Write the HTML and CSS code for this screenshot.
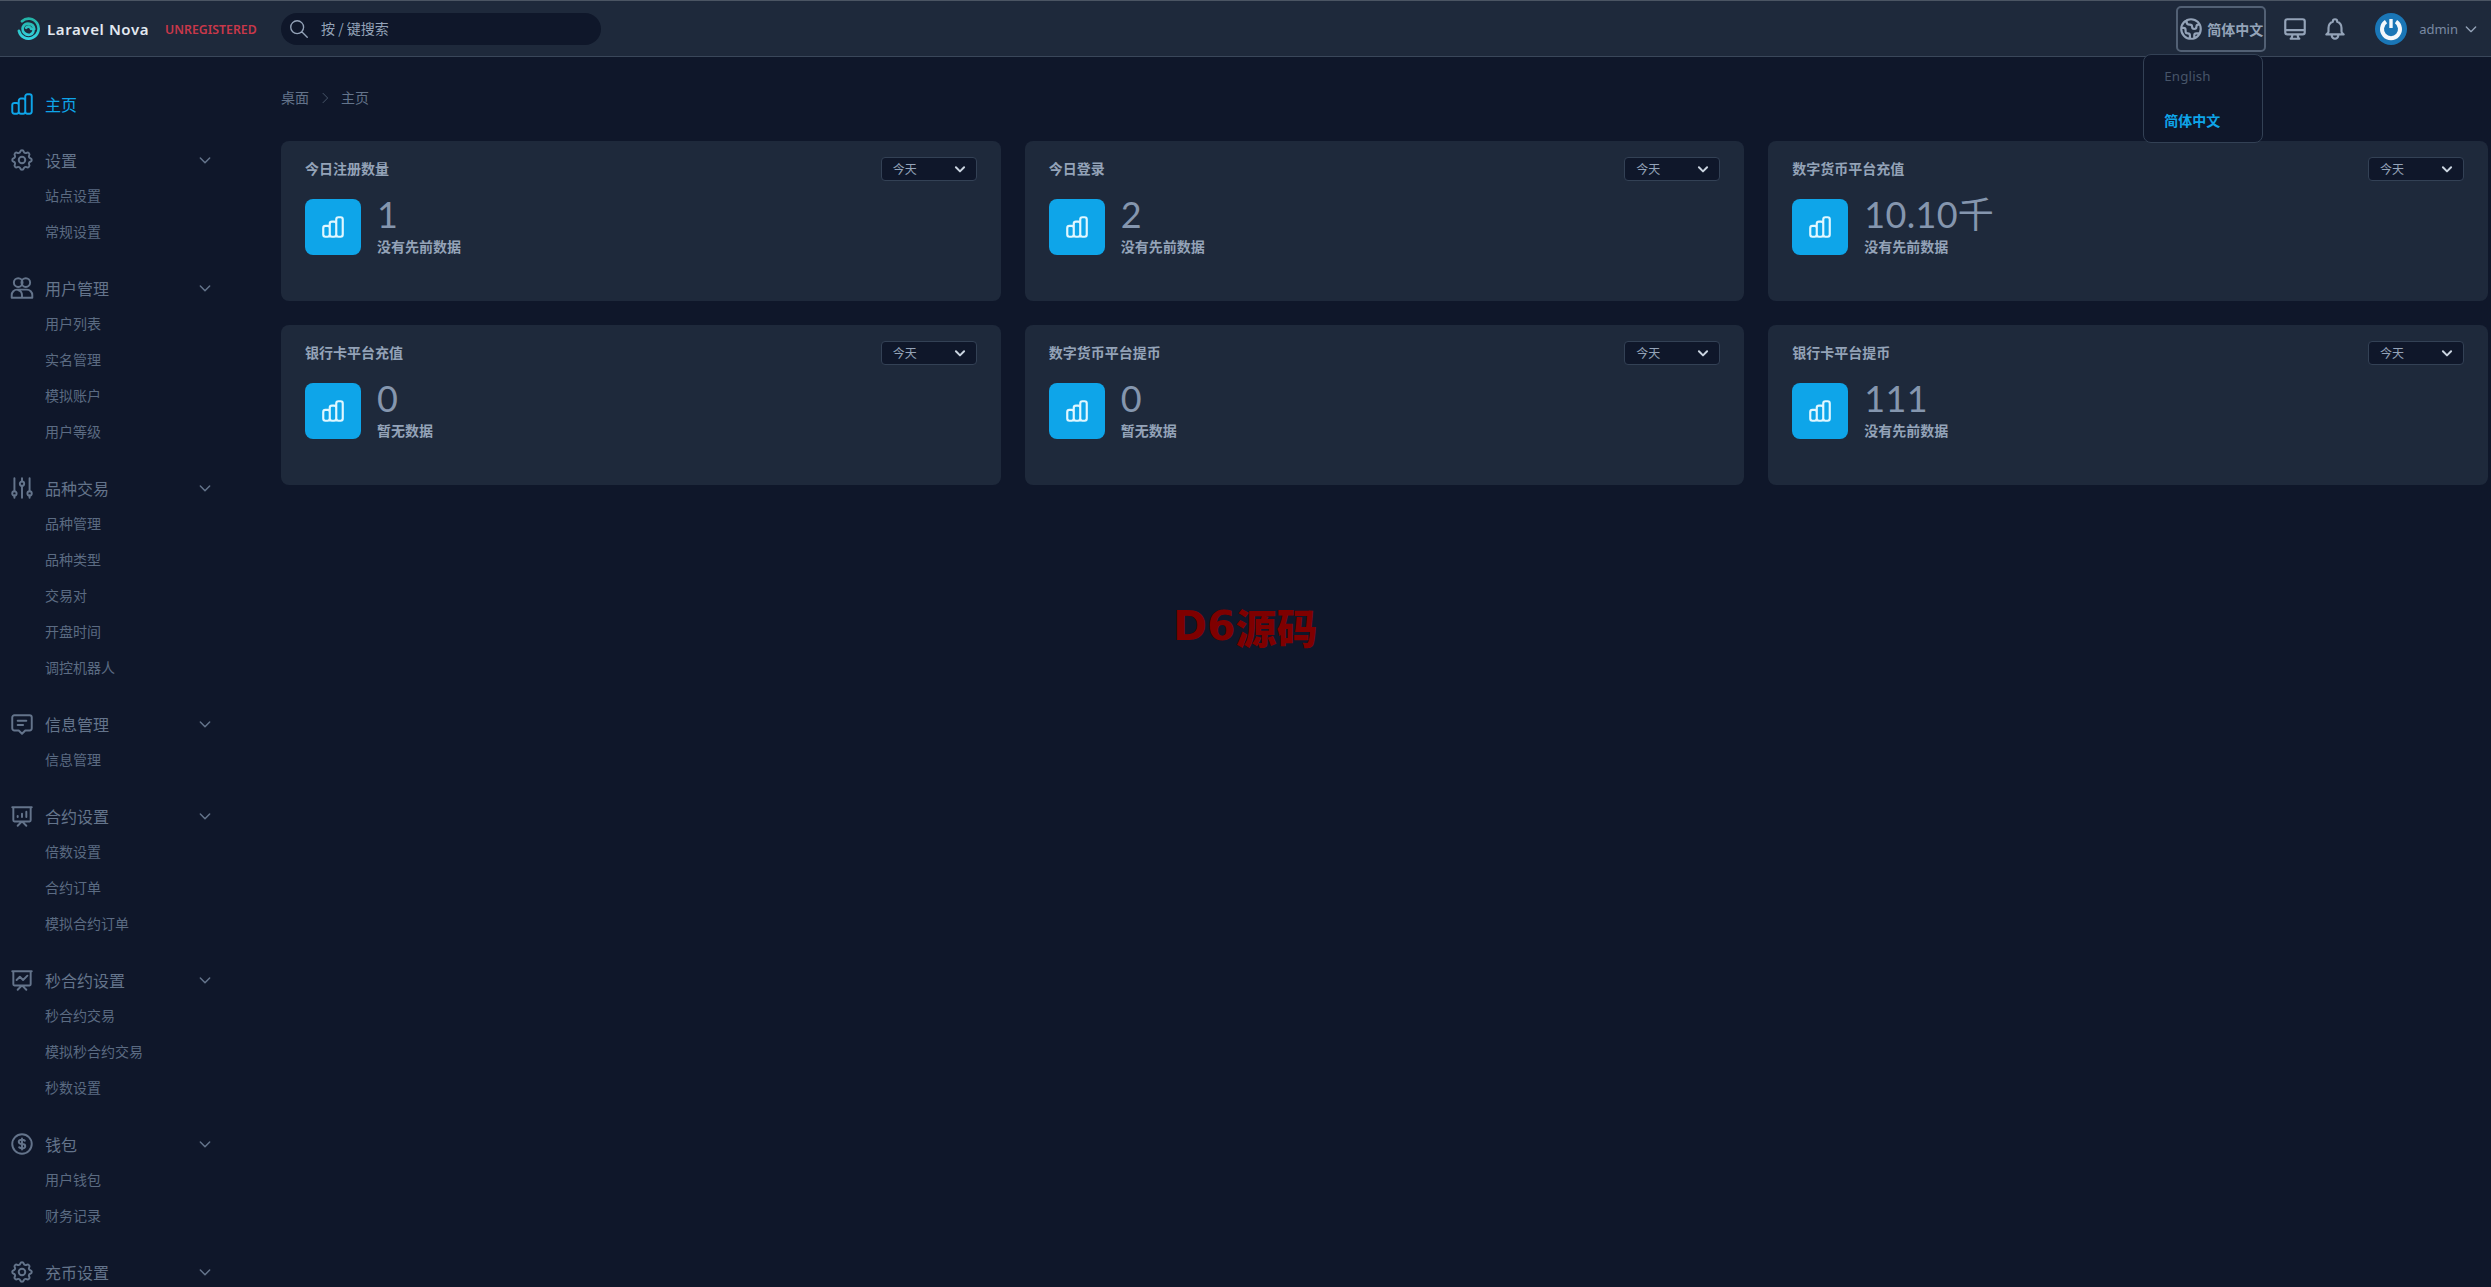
FILE: index.html
```html
<!DOCTYPE html>
<html lang="zh-CN">
<head>
<meta charset="utf-8">
<title>Laravel Nova</title>
<link rel="stylesheet" href="styles.css">
</head>
<body>
<svg class="defs" aria-hidden="true">
  <symbol id="i-chart" viewBox="0 0 24 24"><path d="M9 19v-6a2 2 0 00-2-2H5a2 2 0 00-2 2v6a2 2 0 002 2h2a2 2 0 002-2zm0 0V9a2 2 0 012-2h2a2 2 0 012 2v10m-6 0a2 2 0 002 2h2a2 2 0 002-2m0 0V5a2 2 0 012-2h2a2 2 0 012 2v14a2 2 0 01-2 2h-2a2 2 0 01-2-2z"/></symbol>
  <symbol id="i-cog" viewBox="0 0 24 24"><path d="M10.325 4.317c.426-1.756 2.924-1.756 3.35 0a1.724 1.724 0 002.573 1.066c1.543-.94 3.31.826 2.37 2.37a1.724 1.724 0 001.065 2.572c1.756.426 1.756 2.924 0 3.35a1.724 1.724 0 00-1.066 2.573c.94 1.543-.826 3.31-2.37 2.37a1.724 1.724 0 00-2.572 1.065c-.426 1.756-2.924 1.756-3.35 0a1.724 1.724 0 00-2.573-1.066c-1.543.94-3.31-.826-2.37-2.37a1.724 1.724 0 00-1.065-2.572c-1.756-.426-1.756-2.924 0-3.35a1.724 1.724 0 001.066-2.573c-.94-1.543.826-3.31 2.37-2.37.996.608 2.296.07 2.572-1.065z"/><path d="M15 12a3 3 0 11-6 0 3 3 0 016 0z"/></symbol>
  <symbol id="i-users" viewBox="0 0 24 24"><circle cx="8.5" cy="7" r="4"/><circle cx="15.5" cy="7" r="4"/><path d="M2.5 21v-2.500a5 5 0 015-5h9a5 5 0 015 5V21zM12 21v-2a5 5 0 00-3.500-5"/></symbol>
  <symbol id="i-sliders" viewBox="0 0 24 24"><path d="M5 3v12M5 19v2M12 3v3M12 10v11M19 3v12M19 19v2"/><circle cx="5" cy="17" r="2"/><circle cx="12" cy="8" r="2"/><circle cx="19" cy="17" r="2"/></symbol>
  <symbol id="i-chat" viewBox="0 0 24 24"><path d="M8 9h8M8 13h5M5 4h14a2 2 0 012 2v10a2 2 0 01-2 2h-4l-3 3-3-3H5a2 2 0 01-2-2V6a2 2 0 012-2z"/></symbol>
  <symbol id="i-pres-bar" viewBox="0 0 24 24"><path d="M8 13v-1m4 1v-3m4 3V8M8 21l4-4 4 4M3 4h18M4 4h16v12a1 1 0 01-1 1H5a1 1 0 01-1-1V4z"/></symbol>
  <symbol id="i-pres-line" viewBox="0 0 24 24"><path d="M7 12l3-3 3 3 4-4M8 21l4-4 4 4M3 4h18M4 4h16v12a1 1 0 01-1 1H5a1 1 0 01-1-1V4z"/></symbol>
  <symbol id="i-dollar" viewBox="0 0 24 24"><path d="M12 8c-1.657 0-3 .895-3 2s1.343 2 3 2 3 .895 3 2-1.343 2-3 2m0-8c1.110 0 2.080.402 2.599 1M12 8V7m0 1v8m0 0v1m0-1c-1.110 0-2.080-.402-2.599-1M21 12a9 9 0 11-18 0 9 9 0 0118 0z"/></symbol>
  <symbol id="i-chev" viewBox="0 0 24 24"><path d="M19 9l-7 7-7-7"/></symbol>
</svg>

<header class="topbar">
  <div class="brand">
    <svg class="logo" viewBox="0 0 24 24" fill="none" aria-hidden="true">
      <defs><linearGradient id="swirl" x1="0" y1="0" x2="0" y2="1"><stop offset="0" stop-color="#23b3a6"/><stop offset="1" stop-color="#35d3e2"/></linearGradient></defs>
      <path stroke="url(#swirl)" stroke-width="2.800" stroke-linecap="round" d="M5.200 4.400A10.400 10.400 0 1 1 2 14.500M18 12.600A6.300 6.300 0 0 0 6.200 10.300 6.300 6.300 0 0 0 14 18.300 5.200 5.200 0 0 0 17 12M9.500 11.200A3 3 0 0 1 14.800 12.500"/>
    </svg>
    <span class="brand-name">Laravel Nova</span>
    <span class="brand-flag">UNREGISTERED</span>
  </div>
  <div class="search">
    <svg class="icon search-icon" viewBox="0 0 24 24"><path d="M21 21l-6-6m2-5a7 7 0 11-14 0 7 7 0 0114 0z"/></svg>
    <span>按 / 键搜索</span>
  </div>
  <div class="top-actions">
    <div class="lang">
      <button class="lang-btn" type="button">
        <svg class="icon lang-globe" viewBox="0 0 24 24"><path d="M3.055 11H5a2 2 0 012 2v1a2 2 0 002 2 2 2 0 012 2v2.945M8 3.935V5.500A2.500 2.500 0 0010.500 8h.5a2 2 0 012 2 2 2 0 104 0 2 2 0 012-2h1.064M15 20.488V18a2 2 0 012-2h3.064M21 12a9 9 0 11-18 0 9 9 0 0118 0z"/></svg>
        <span>简体中文</span>
      </button>
      <div class="lang-menu">
        <div class="lang-item">English</div>
        <div class="lang-item lang-item-on">简体中文</div>
      </div>
    </div>
    <svg class="icon top-icon monitor" viewBox="0 0 24 24"><path d="M9.750 17L9 20l-1 1h8l-1-1-.75-3M3 13h18M5 17h14a2 2 0 002-2V5a2 2 0 00-2-2H5a2 2 0 00-2 2v10a2 2 0 002 2z"/></svg>
    <svg class="icon top-icon bell" viewBox="0 0 24 24"><path d="M15 17h5l-1.405-1.405A2.032 2.032 0 0118 14.158V11a6.002 6.002 0 00-4-5.659V5a2 2 0 10-4 0v.341C7.670 6.165 6 8.388 6 11v3.159c0 .538-.214 1.055-.595 1.436L4 17h5m6 0v1a3 3 0 11-6 0v-1m6 0H9"/></svg>
    <svg class="avatar" viewBox="0 0 32 32" aria-hidden="true">
      <circle cx="16" cy="16" r="16" fill="#1a76b6"/>
      <path d="M11 8.700a9 9 0 1010 0" fill="none" stroke="#f4f8fb" stroke-width="4"/>
      <path d="M16 6v9" stroke="#f4f8fb" stroke-width="3.400" fill="none"/>
    </svg>
    <span class="user-name">admin</span>
    <svg class="icon user-chev"><use href="#i-chev"/></svg>
  </div>
</header>

<div class="shell">
  <nav class="sidebar">
    <div class="nav-group">
      <a class="nav-head nav-head-on"><svg class="icon nav-icon"><use href="#i-chart"/></svg><span>主页</span></a>
    </div>
    <div class="nav-group">
      <a class="nav-head"><svg class="icon nav-icon"><use href="#i-cog"/></svg><span>设置</span><svg class="icon nav-chev"><use href="#i-chev"/></svg></a>
      <a class="nav-sub">站点设置</a><a class="nav-sub">常规设置</a>
    </div>
    <div class="nav-group">
      <a class="nav-head"><svg class="icon nav-icon"><use href="#i-users"/></svg><span>用户管理</span><svg class="icon nav-chev"><use href="#i-chev"/></svg></a>
      <a class="nav-sub">用户列表</a><a class="nav-sub">实名管理</a><a class="nav-sub">模拟账户</a><a class="nav-sub">用户等级</a>
    </div>
    <div class="nav-group">
      <a class="nav-head"><svg class="icon nav-icon"><use href="#i-sliders"/></svg><span>品种交易</span><svg class="icon nav-chev"><use href="#i-chev"/></svg></a>
      <a class="nav-sub">品种管理</a><a class="nav-sub">品种类型</a><a class="nav-sub">交易对</a><a class="nav-sub">开盘时间</a><a class="nav-sub">调控机器人</a>
    </div>
    <div class="nav-group">
      <a class="nav-head"><svg class="icon nav-icon"><use href="#i-chat"/></svg><span>信息管理</span><svg class="icon nav-chev"><use href="#i-chev"/></svg></a>
      <a class="nav-sub">信息管理</a>
    </div>
    <div class="nav-group">
      <a class="nav-head"><svg class="icon nav-icon"><use href="#i-pres-bar"/></svg><span>合约设置</span><svg class="icon nav-chev"><use href="#i-chev"/></svg></a>
      <a class="nav-sub">倍数设置</a><a class="nav-sub">合约订单</a><a class="nav-sub">模拟合约订单</a>
    </div>
    <div class="nav-group">
      <a class="nav-head"><svg class="icon nav-icon"><use href="#i-pres-line"/></svg><span>秒合约设置</span><svg class="icon nav-chev"><use href="#i-chev"/></svg></a>
      <a class="nav-sub">秒合约交易</a><a class="nav-sub">模拟秒合约交易</a><a class="nav-sub">秒数设置</a>
    </div>
    <div class="nav-group">
      <a class="nav-head"><svg class="icon nav-icon"><use href="#i-dollar"/></svg><span>钱包</span><svg class="icon nav-chev"><use href="#i-chev"/></svg></a>
      <a class="nav-sub">用户钱包</a><a class="nav-sub">财务记录</a>
    </div>
    <div class="nav-group">
      <a class="nav-head"><svg class="icon nav-icon"><use href="#i-cog"/></svg><span>充币设置</span><svg class="icon nav-chev"><use href="#i-chev"/></svg></a>
    </div>
  </nav>

  <main class="content">
    <div class="crumbs">
      <span>桌面</span>
      <svg class="icon crumb-chev" viewBox="0 0 24 24"><path d="M9 5l7 7-7 7"/></svg>
      <span>主页</span>
    </div>
    <section class="cards">
      <article class="card">
        <div class="card-head"><h3>今日注册数量</h3><div class="range"><span>今天</span><svg class="icon range-chev"><use href="#i-chev"/></svg></div></div>
        <div class="card-body"><div class="tile"><svg class="icon tile-icon"><use href="#i-chart"/></svg></div><div><div class="value">1</div><div class="note">没有先前数据</div></div></div>
      </article>
      <article class="card">
        <div class="card-head"><h3>今日登录</h3><div class="range"><span>今天</span><svg class="icon range-chev"><use href="#i-chev"/></svg></div></div>
        <div class="card-body"><div class="tile"><svg class="icon tile-icon"><use href="#i-chart"/></svg></div><div><div class="value">2</div><div class="note">没有先前数据</div></div></div>
      </article>
      <article class="card">
        <div class="card-head"><h3>数字货币平台充值</h3><div class="range"><span>今天</span><svg class="icon range-chev"><use href="#i-chev"/></svg></div></div>
        <div class="card-body"><div class="tile"><svg class="icon tile-icon"><use href="#i-chart"/></svg></div><div><div class="value">10.10千</div><div class="note">没有先前数据</div></div></div>
      </article>
      <article class="card">
        <div class="card-head"><h3>银行卡平台充值</h3><div class="range"><span>今天</span><svg class="icon range-chev"><use href="#i-chev"/></svg></div></div>
        <div class="card-body"><div class="tile"><svg class="icon tile-icon"><use href="#i-chart"/></svg></div><div><div class="value">0</div><div class="note">暂无数据</div></div></div>
      </article>
      <article class="card">
        <div class="card-head"><h3>数字货币平台提币</h3><div class="range"><span>今天</span><svg class="icon range-chev"><use href="#i-chev"/></svg></div></div>
        <div class="card-body"><div class="tile"><svg class="icon tile-icon"><use href="#i-chart"/></svg></div><div><div class="value">0</div><div class="note">暂无数据</div></div></div>
      </article>
      <article class="card">
        <div class="card-head"><h3>银行卡平台提币</h3><div class="range"><span>今天</span><svg class="icon range-chev"><use href="#i-chev"/></svg></div></div>
        <div class="card-body"><div class="tile"><svg class="icon tile-icon"><use href="#i-chart"/></svg></div><div><div class="value">111</div><div class="note">没有先前数据</div></div></div>
      </article>
    </section>
  </main>
</div>

<div class="watermark"><span class="wm-latin">D6</span><span class="wm-cjk">源码</span></div>
</body>
</html>
```

FILE: styles.css
```css
* { box-sizing: border-box; }
html, body { margin: 0; height: 100%; }
body {
  overflow: hidden;
  background: #0f172a;
  color: #94a3b8;
  font-family: "Noto Sans", "Noto Sans CJK SC", sans-serif;
  font-size: 14px;
}
.defs { position: absolute; width: 0; height: 0; }
.icon { fill: none; stroke: currentColor; stroke-width: 2; stroke-linecap: round; stroke-linejoin: round; display: block; flex: none; }

/* top bar */
.topbar {
  display: flex;
  align-items: center;
  height: 57px;
  padding: 0 12px 0 17px;
  background: #1e293b;
  border-top: 1px solid #4b5563;
  border-bottom: 1px solid #3a475a;
}
.brand { display: flex; align-items: center; width: 264px; flex: none; }
.logo { width: 23px; height: 23px; flex: none; }
.brand-name { margin-left: 7px; font-weight: 600; font-size: 15px; letter-spacing: .6px; color: #e2e8f0; white-space: nowrap; }
.brand-flag { margin: 1px 0 0 16px; font-weight: 600; font-size: 12.300px; color: #c8384a; white-space: nowrap; }
.search {
  display: flex;
  align-items: center;
  width: 320px;
  height: 32px;
  padding: 0 0 2px 7px;
  border-radius: 16px;
  background: #0f172a;
  color: #94a3b8;
  font-family: "Noto Sans CJK SC", sans-serif;
}
.search-icon { width: 22px; height: 22px; margin-top: 2px; stroke-width: 1.500; color: #94a3b8; }
.search span { margin-left: 11px; }
.top-actions { display: flex; align-items: center; margin-left: auto; color: #94a3b8; }
.lang { position: relative; }
.lang-btn {
  display: flex;
  align-items: center;
  gap: 3px;
  width: 90px;
  height: 46px;
  padding: 0;
  border: 2px solid #526074;
  border-radius: 5px;
  background: transparent;
  color: #94a3b8;
  font-family: "Noto Sans CJK SC", sans-serif;
  font-weight: 700;
  font-size: 14px;
  white-space: nowrap;
}
.lang-globe { width: 26px; height: 26px; }
.lang-menu {
  position: absolute;
  top: 48px;
  left: -33px;
  width: 120px;
  height: 89px;
  padding-left: 20px;
  border: 1px solid #334155;
  border-radius: 8px;
  background: #0f172a;
}
.lang-item { height: 44px; line-height: 43px; font-size: 13.300px; letter-spacing: .2px; color: #475569; }
.lang-item-on { line-height: 42px; font-family: "Noto Sans CJK SC", sans-serif; font-size: 14px; font-weight: 700; letter-spacing: 0; color: #0ea5e9; }
.top-icon { width: 26px; height: 26px; }
.monitor { margin-left: 16px; }
.bell { margin-left: 14px; }
.avatar { width: 32px; height: 32px; margin-left: 27px; flex: none; }
.user-name { margin-left: 12px; font-size: 13px; color: #7a8aa3; }
.user-chev { width: 16px; height: 16px; margin-left: 5px; }

/* layout */
.shell { display: flex; }
.sidebar { flex: none; width: 281px; padding: 29px 0 0 9px; display: flex; flex-direction: column; gap: 20px; font-family: "Noto Sans CJK SC", sans-serif; }
.nav-group { display: flex; flex-direction: column; }
.nav-head { display: flex; align-items: center; height: 36px; font-size: 16px; color: #64748b; }
.nav-head > span { padding-bottom: 1px; }
.nav-head-on { color: #0ea5e9; }
.nav-icon { width: 26px; height: 26px; margin-right: 10px; stroke-width: 1.800; }
.nav-chev { width: 16px; height: 16px; margin-left: auto; margin-right: 68px; stroke-width: 2.200; }
.nav-sub { display: flex; align-items: center; height: 36px; padding: 0 0 2px 36px; font-size: 14px; color: #5b6b82; }

.content { flex: 1; min-width: 0; padding: 31px 3px 0 0; font-family: "Noto Sans CJK SC", sans-serif; }
.crumbs { display: flex; align-items: center; height: 20px; margin-bottom: 33px; padding-bottom: 2px; color: #64748b; }
.crumb-chev { width: 16px; height: 16px; margin: 2px 8px 0; color: #475569; stroke-width: 1.500; }
.cards { display: grid; grid-template-columns: repeat(3, 1fr); gap: 24px; }
.card { height: 160px; padding: 16px 24px; border-radius: 8px; background: #1e293b; }
.card-head { display: flex; align-items: center; justify-content: space-between; height: 24px; }
.card-head h3 { margin: 0 0 3px; font-size: 14px; font-weight: 700; color: #94a3b8; }
.range {
  display: flex;
  align-items: center;
  justify-content: space-between;
  width: 96px;
  height: 24px;
  padding: 0 9px 0 11px;
  border: 1px solid #334155;
  border-radius: 4px;
  background: #0f172a;
  font-size: 12px;
  color: #94a3b8;
}
.range span { padding-bottom: 2px; }
.range-chev { width: 14px; height: 14px; stroke-width: 3.400; color: #cbd5e1; }
.card-body { display: flex; gap: 16px; margin-top: 18px; }
.tile { display: flex; align-items: center; justify-content: center; width: 56px; height: 56px; border-radius: 8px; background: #0ea5e9; }
.tile-icon { width: 26px; height: 26px; color: #e0f7ff; }
.value { margin-top: -2px; font-family: "Lato", "Noto Sans CJK SC", sans-serif; font-size: 36px; line-height: 34px; letter-spacing: .3px; color: #8596ae; }
.note { margin-top: 5px; font-weight: 700; line-height: 20px; color: #94a3b8; }

/* watermark overlay */
.watermark { position: absolute; left: 1173px; top: 603px; display: flex; align-items: center; height: 46px; color: #7f0000; white-space: nowrap; }
.wm-latin { font-family: "DejaVu Sans", sans-serif; font-weight: 700; font-size: 41px; line-height: 46px; }
.wm-cjk { font-family: "Noto Sans CJK SC", sans-serif; font-weight: 900; font-size: 41px; line-height: 46px; }
```
